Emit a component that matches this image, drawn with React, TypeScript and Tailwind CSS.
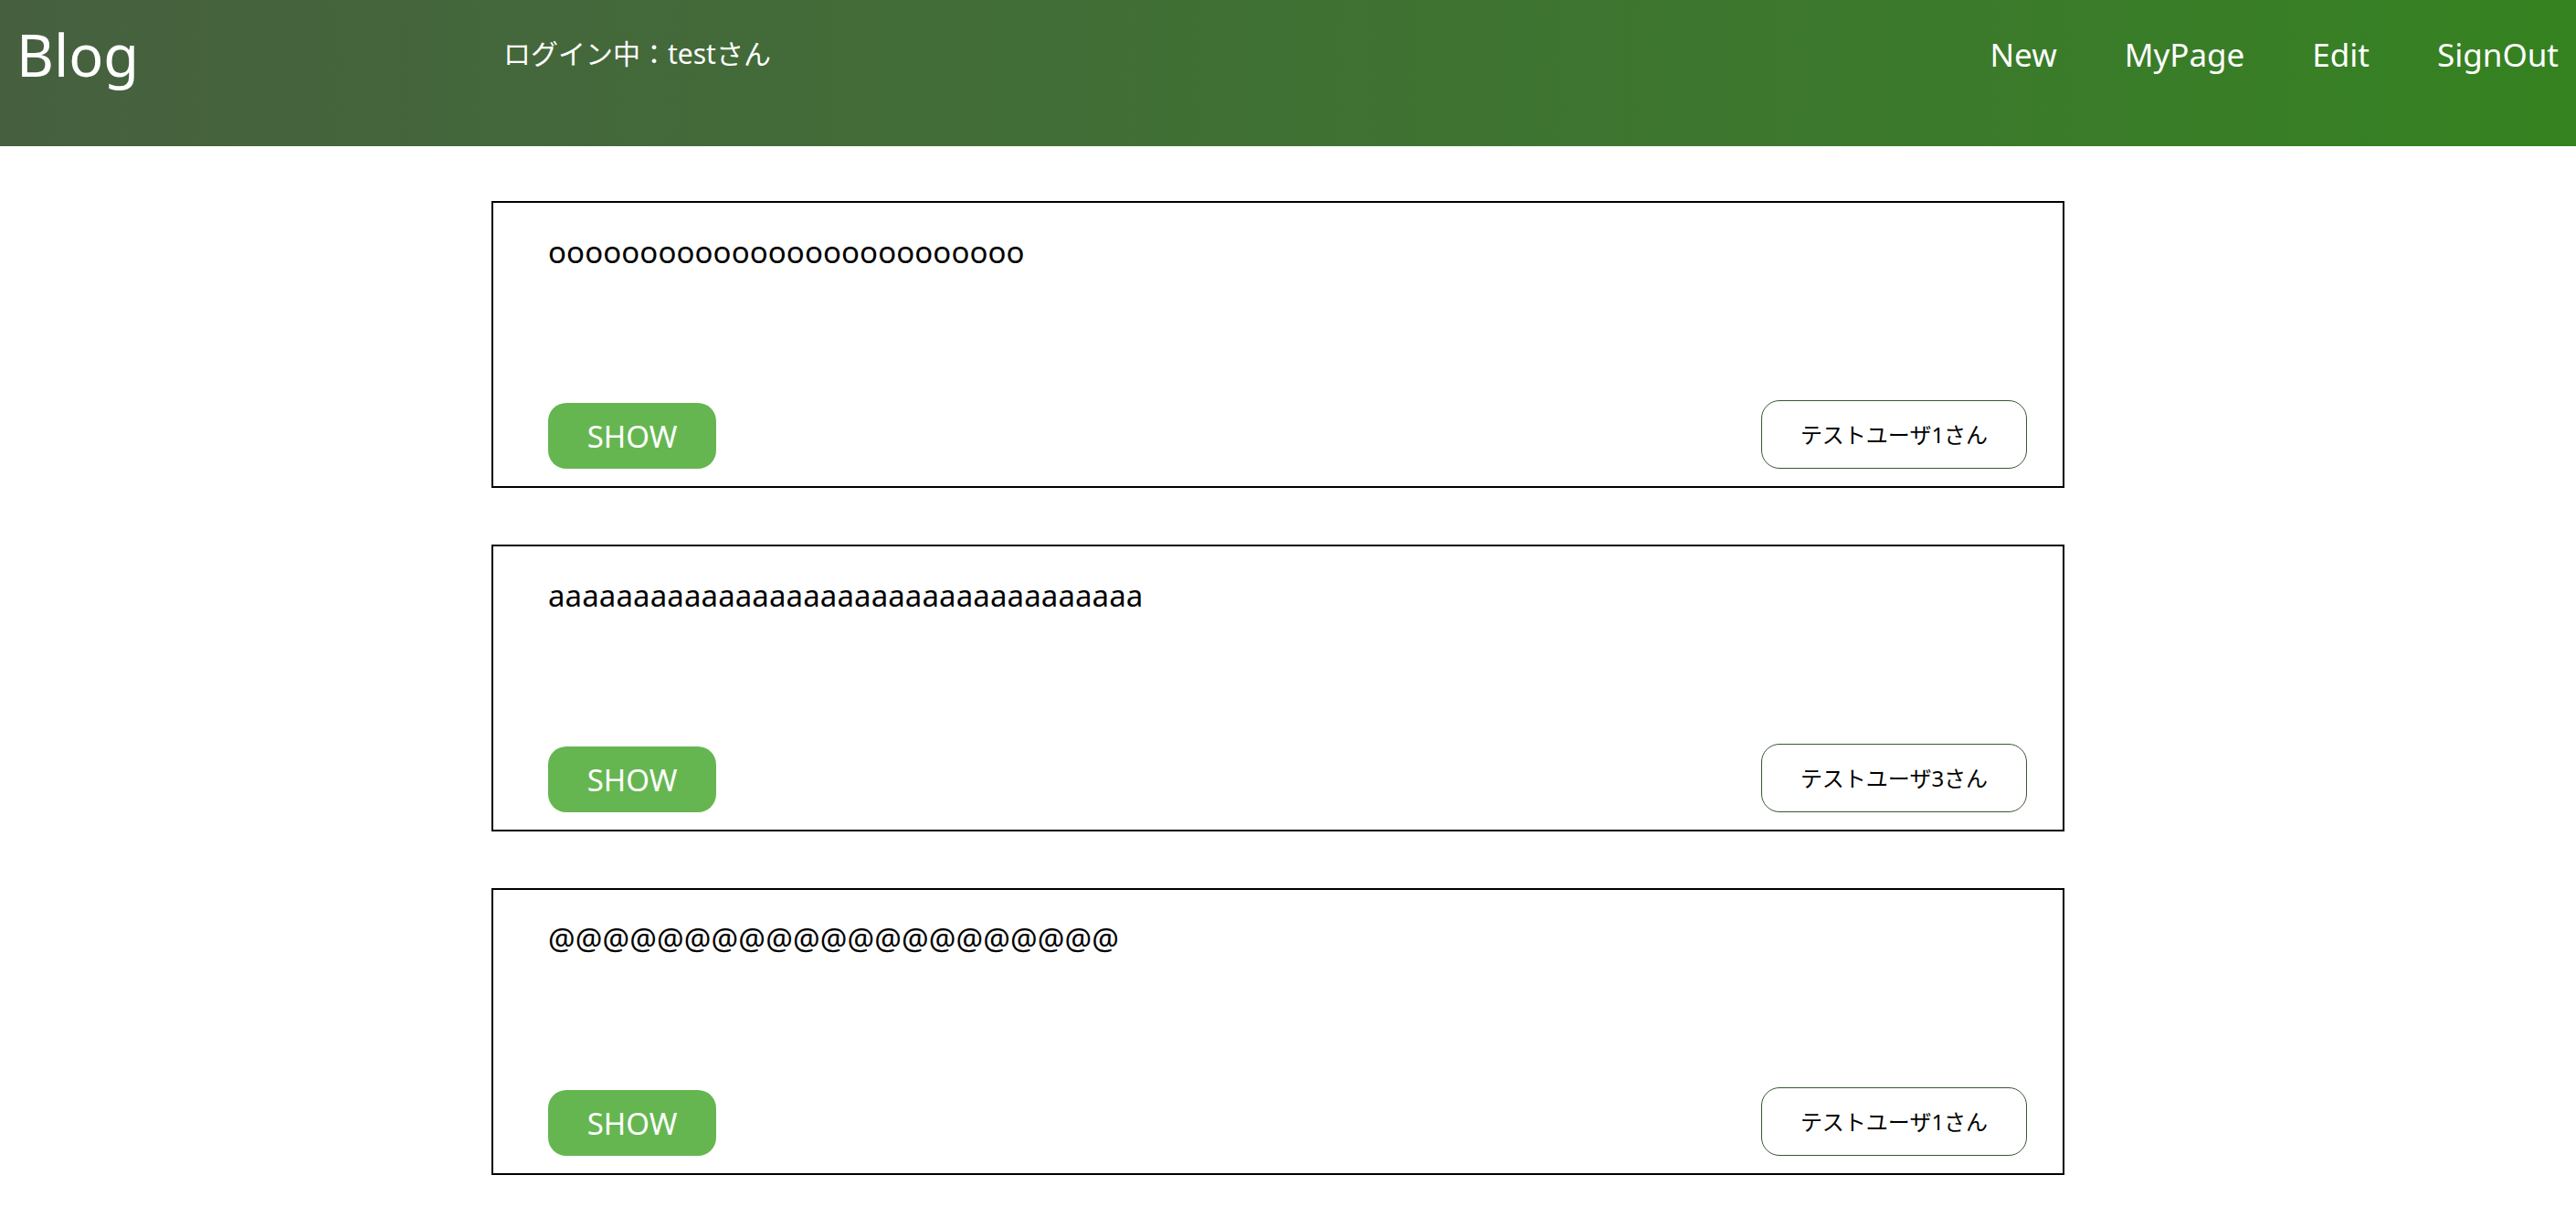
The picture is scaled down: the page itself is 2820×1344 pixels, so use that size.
const posts = [
  { title: 'oooooooooooooooooooooooooo', user: 'テストユーザ1さん' },
  { title: 'aaaaaaaaaaaaaaaaaaaaaaaaaaaaaaaaaaa', user: 'テストユーザ3さん' },
  { title: '@@@@@@@@@@@@@@@@@@@@@', user: 'テストユーザ1さん' },
]

const links = ['New', 'MyPage', 'Edit', 'SignOut']

function Header() {
  return (
    <header className="h-[160px] bg-linear-to-r from-[#46603f] to-[#358220] text-white">
      <div className="h-[118px] flex items-center pl-[18px] pr-[19px]">
        <h1 className="w-[533px] text-[63px] leading-[63px]">Blog</h1>
        <p className="text-[30px] leading-[30px]">ログイン中：testさん</p>
        <nav className="ml-auto flex gap-[74px] text-[35px] leading-[35px]">
          {links.map((link) => (
            <a key={link} href="#">
              {link}
            </a>
          ))}
        </nav>
      </div>
    </header>
  )
}

function PostCard({ title, user }: { title: string; user: string }) {
  return (
    <div className="w-[1722px] h-[314px] border-2 border-black flex flex-col justify-between pl-[60px] pr-[39px] pt-[37px] pb-[19px]">
      <p className="text-[33px] leading-[33px] text-black tracking-[0.1px]">{title}</p>
      <div className="flex items-end justify-between">
        <button className="w-[184px] h-[72px] rounded-[20px] bg-[#65b651] text-white text-[33px] leading-none">
          SHOW
        </button>
        <button className="w-[291px] h-[75px] rounded-[20px] border-[1.5px] border-[#3a5634] bg-white text-black text-[24px] leading-none">
          {user}
        </button>
      </div>
    </div>
  )
}

export default function App() {
  return (
    <div className="min-h-screen bg-white font-['Noto_Sans','Noto_Sans_CJK_JP',sans-serif]">
      <Header />
      <main className="flex flex-col gap-[62px] pt-[60px] pl-[538px]">
        {posts.map((post, index) => (
          <PostCard key={index} title={post.title} user={post.user} />
        ))}
      </main>
    </div>
  )
}
